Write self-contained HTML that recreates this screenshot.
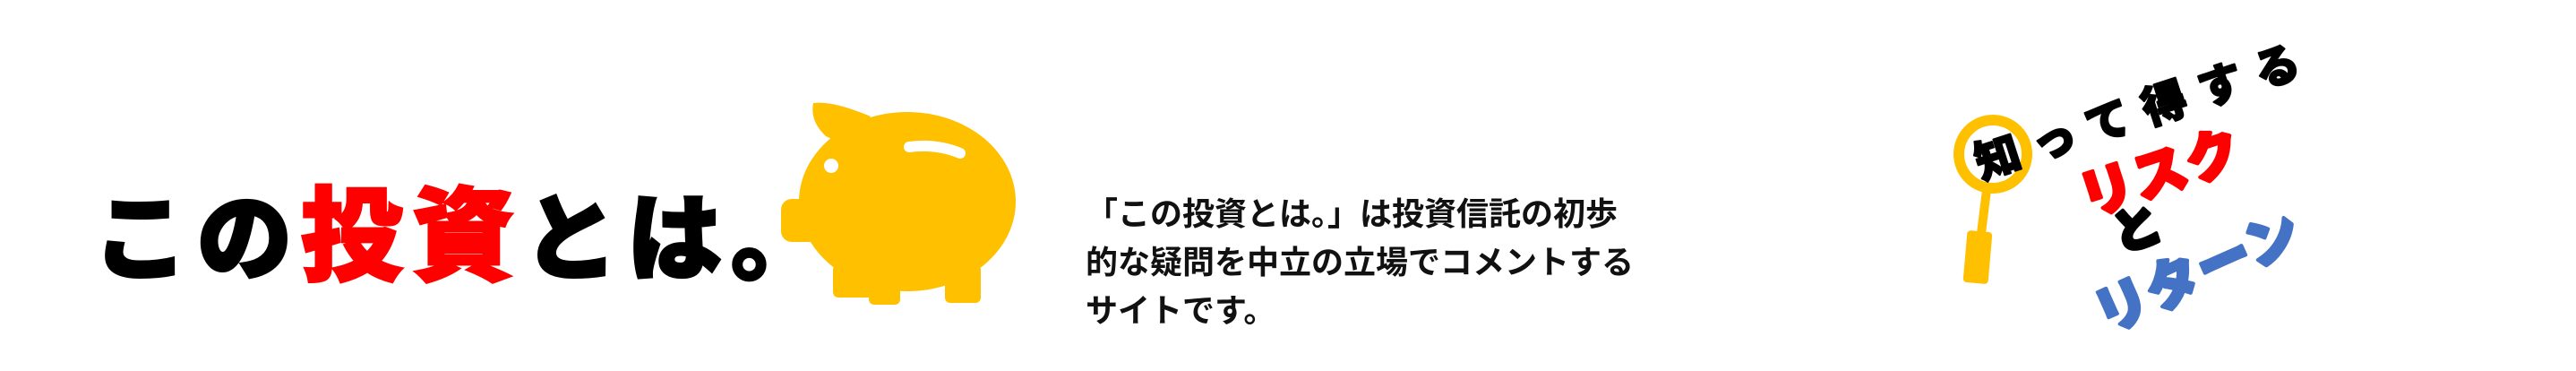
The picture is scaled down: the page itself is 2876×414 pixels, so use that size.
<!DOCTYPE html>
<html><head><meta charset="utf-8"><style>
html,body{margin:0;padding:0;background:#fff;width:2876px;height:414px;overflow:hidden;position:relative}
.t{position:absolute;font-family:"Liberation Sans","Noto Sans CJK JP",sans-serif;white-space:nowrap}
.title{left:104px;top:196px;font-size:106px;font-weight:900;line-height:140px;letter-spacing:10px;color:#000;-webkit-text-stroke:3px #000}
.title .r{color:#ff0000;font-size:114px;-webkit-text-stroke:3px #ff0000}
.p{left:1212px;top:212px;font-size:36px;font-weight:700;line-height:54px;color:#111}
</style></head><body>
<div class="t title">この<span class="r">投資</span>とは。</div>
<svg style="position:absolute;left:860px;top:100px" width="300" height="260" viewBox="0 0 300 260">
<g fill="#ffc000">
<ellipse cx="153" cy="125" rx="121" ry="100"/>
<path d="M48 15 Q70 12 112 30 L85 62 L62 52 Q44 35 48 15Z"/>
<rect x="12" y="122" width="60" height="48" rx="12"/>
<rect x="70" y="195" width="45" height="37" rx="6"/>
<rect x="110" y="200" width="35" height="40" rx="6"/>
<rect x="195" y="195" width="40" height="43" rx="6"/>
</g>
<circle cx="68" cy="85" r="8" fill="#fff"/>
<path d="M155 64 Q185 60 212 71" stroke="#fff" stroke-width="12" stroke-linecap="round" fill="none"/>
</svg>
<div class="t p">「この投資とは。」は投資信託の初歩<br>的な疑問を中立の立場でコメントする<br>サイトです。</div>
<svg style="position:absolute;left:2150px;top:20px" width="500" height="380" viewBox="0 0 500 380">
<circle cx="75" cy="152" r="38" fill="none" stroke="#ffc000" stroke-width="12"/>
<path d="M68 192 L62 240" stroke="#ffc000" stroke-width="10"/>
<rect x="44" y="238" width="28" height="58" rx="4" fill="#ffc000" transform="rotate(5 58 267)"/>
<g font-family="'Liberation Sans','Noto Sans CJK JP',sans-serif" font-weight="900" stroke-linejoin="round">
<text x="54" y="175" font-size="50" stroke="#000" stroke-width="2" transform="rotate(-18 75 152)" letter-spacing="16">知って得する</text>
<text x="170" y="195" font-size="60" fill="#ff0000" stroke="#ff0000" stroke-width="4" transform="rotate(-18 260 175)" letter-spacing="2">リスク</text>
<text x="210" y="255" font-size="54" stroke="#000" stroke-width="4" transform="rotate(-18 235 240)">と</text>
<text x="180" y="315" font-size="60" fill="#4472c4" stroke="#4472c4" stroke-width="4" transform="rotate(-24 280 285)" letter-spacing="2">リターン</text>
</g>
</svg>
</body></html>
